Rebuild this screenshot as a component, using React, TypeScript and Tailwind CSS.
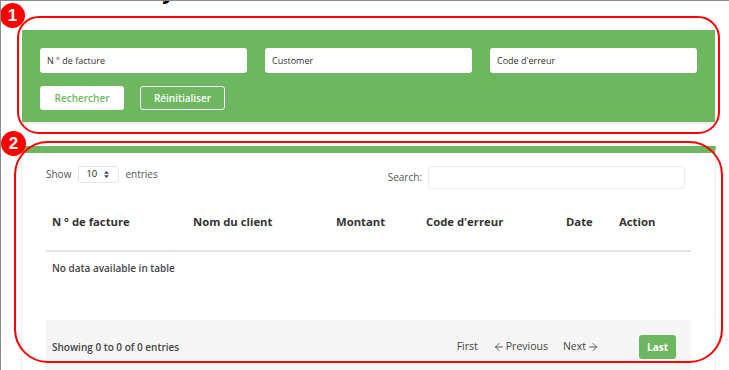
import { ArrowLeft, ArrowRight } from 'lucide-react';

const columns = [
  { label: 'N ° de facture', width: 'w-[141px]' },
  { label: 'Nom du client', width: 'w-[143px]' },
  { label: 'Montant', width: 'w-[90px]' },
  { label: "Code d'erreur", width: 'w-[140px]' },
  { label: 'Date', width: 'w-[53px]' },
  { label: 'Action', width: 'w-[78px]' },
];

function FilterInput({ placeholder }: { placeholder: string }) {
  return (
    <input
      type="text"
      placeholder={placeholder}
      className="h-[25px] w-full rounded-[3px] bg-white px-[7px] text-[9px] font-medium text-[#333] outline-none placeholder:text-[#333]"
    />
  );
}

function Badge({ n, className }: { n: number; className: string }) {
  return (
    <div
      className={`absolute flex h-[25px] w-[25px] items-center justify-center rounded-full bg-[#f00] font-['Liberation_Sans',sans-serif] text-[17px] font-bold leading-none text-white ${className}`}
    >
      {n}
    </div>
  );
}

export default function App() {
  return (
    <div className="relative h-[370px] w-[729px] overflow-hidden border-l border-t border-[#8a8a8a] bg-white font-['Open_Sans',sans-serif]">
      {/* page title, scrolled mostly out of view */}
      <div className="h-[29px] overflow-hidden pl-[9px]">
        <h1 className="-mt-[22px] text-[22px] font-bold leading-none text-black">Invoice History</h1>
      </div>

      {/* filters */}
      <div className="ml-[21px] h-[92px] w-[693px] bg-[#6cb760] px-[18px] pt-[18px] shadow-[0_2px_2px_rgba(0,0,0,0.08)]">
        <div className="grid grid-cols-3 gap-[18px]">
          <FilterInput placeholder="N ° de facture" />
          <FilterInput placeholder="Customer" />
          <FilterInput placeholder="Code d'erreur" />
        </div>
        <div className="mt-[13px] flex gap-[16px]">
          <button className="h-[24px] w-[84px] rounded-[3px] bg-white text-[10px] font-semibold text-[#6cb760]">
            Rechercher
          </button>
          <button className="h-[24px] w-[85px] rounded-[3px] border-[1.5px] border-white text-[10px] font-semibold text-white">
            Réinitialiser
          </button>
        </div>
      </div>

      {/* table card */}
      <div className="ml-[20px] mt-[24px] w-[695px] border-x border-t-[7px] border-x-[#eeeeee] border-t-[#6cb760] px-[24px] pt-[13px]">
        <div className="flex items-start justify-between">
          <div className="flex h-[17px] items-center text-[10px] text-[#555]">
            <span>Show</span>
            <div className="ml-[7px] flex h-[17px] w-[41px] items-center justify-between rounded-[3px] border border-[#e6e6e6] pl-[7px] pr-[9px] text-[9.5px] font-medium text-[#222]">
              <span>10</span>
              <svg width="5" height="7" viewBox="0 0 5 7" className="fill-[#444]">
                <path d="M2.5 0L5 2.8H0z M2.5 7L0 4.2h5z" />
              </svg>
            </div>
            <span className="ml-[6px]">entries</span>
          </div>
          <div className="mr-[6px] flex items-center gap-[6px] text-[10px] text-[#555]">
            <span>Search:</span>
            <input className="h-[23px] w-[257px] rounded-[3px] border border-[#ececec] outline-none" />
          </div>
        </div>

        <table className="mt-[5px] w-[645px] table-fixed border-collapse text-left">
          <colgroup>
            {columns.map((c) => (
              <col key={c.label} className={c.width} />
            ))}
          </colgroup>
          <thead>
            <tr className="h-[57px] border-b-2 border-[#e4e4e4]">
              {columns.map((c) => (
                <th key={c.label} className="px-[6px] text-[11.3px] font-bold text-[#333]">
                  {c.label}
                </th>
              ))}
            </tr>
          </thead>
          <tbody>
            <tr className="h-[32px]">
              <td colSpan={6} className="px-[6px] pt-[1px] text-[10px] font-semibold text-[#444]">
                No data available in table
              </td>
            </tr>
          </tbody>
        </table>

        <div className="mt-[37px] flex h-[60px] w-[645px] items-start justify-between bg-[#f5f5f5] pl-[6px] pr-[15px] pt-[15px]">
          <span className="flex h-[24px] items-center text-[10px] font-semibold text-[#444]">
            Showing 0 to 0 of 0 entries
          </span>
          <div className="flex h-[24px] items-center text-[10.5px] font-medium text-[#444]">
            <span>First</span>
            <span className="ml-[15px] flex items-center gap-[1px]">
              <ArrowLeft size={12} strokeWidth={1.75} />
              Previous
            </span>
            <span className="ml-[15px] flex items-center gap-[1px]">
              Next
              <ArrowRight size={12} strokeWidth={1.75} />
            </span>
            <button className="ml-[40px] h-[24px] w-[37px] rounded-[3px] bg-[#6cb760] text-[10px] font-bold text-white">
              Last
            </button>
          </div>
        </div>
      </div>

      {/* annotations */}
      <div className="pointer-events-none absolute left-[16px] top-[15px] h-[118px] w-[703px] rounded-[22px] border-2 border-[#f00]" />
      <div className="pointer-events-none absolute left-[13px] top-[140px] h-[222px] w-[709px] rounded-[34px] border-2 border-[#f00]" />
      <Badge n={1} className="-left-[1px] top-[2px]" />
      <Badge n={2} className="left-0 top-[130px]" />
    </div>
  );
}
